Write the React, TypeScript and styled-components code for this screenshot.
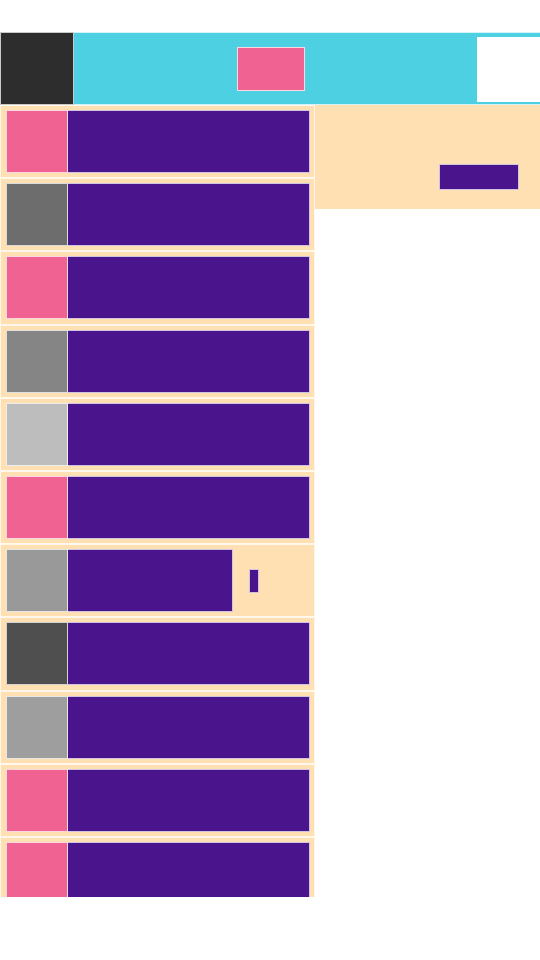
import React from "react";
import styled, { createGlobalStyle } from "styled-components";

const Global = createGlobalStyle`
  html, body { margin: 0; padding: 0; background: #ffffff; }
  body { font-family: "Liberation Sans", Arial, sans-serif; overflow: hidden; }
  * { box-sizing: border-box; }
`;

const edge = "1px solid rgba(255,255,255,0.75)";

const Page = styled.div`
  width: 540px;
  height: 960px;
  padding-top: 32px;
  overflow: hidden;
`;

const Header = styled.header`
  display: flex;
  height: 73px;
`;

const Logo = styled.div`
  width: 74px;
  height: 73px;
  background: #2d2d2d;
  border: ${edge};
`;

const Bar = styled.div`
  flex: 1;
  display: flex;
  align-items: flex-start;
  background: #4dd0e1;
  border: ${edge};
  border-left: none;
  border-right: none;
`;

const Title = styled.div`
  width: 68px;
  height: 44px;
  margin-left: 163px;
  margin-top: 14px;
  background: #f06292;
  border: ${edge};
`;

const Avatar = styled.div`
  width: 63px;
  height: 65px;
  margin-left: auto;
  margin-top: 4px;
  background: #ffffff;
`;

const Body = styled.div`
  display: flex;
  align-items: flex-start;
`;

const List = styled.div`
  width: 315px;
  height: 792px;
  overflow: hidden;
  display: flex;
  flex-direction: column;
`;

const Row = styled.div`
  flex: 0 0 73.2px;
  display: flex;
  align-items: center;
  padding: 0 4px 0 5px;
  background: #ffe0b2;
  border: ${edge};
`;

const Thumb = styled.div<{ $c: string }>`
  width: 62px;
  height: 63px;
  background: ${(p) => p.$c};
  border: ${edge};
`;

const Label = styled.div<{ $w: number }>`
  width: ${(p) => p.$w}px;
  height: 63px;
  background: #4a148c;
  border: ${edge};
  border-left: none;
`;

const Tag = styled.div`
  width: 10px;
  height: 24px;
  margin-left: 16px;
  background: #4a148c;
  border: ${edge};
`;

const Panel = styled.aside`
  width: 225px;
  height: 104px;
  background: #ffe0b2;
  display: flex;
  align-items: flex-end;
  justify-content: flex-end;
  padding: 0 21px 19px 0;
`;

const Action = styled.div`
  width: 80px;
  height: 26px;
  background: #4a148c;
  border: ${edge};
`;

const rows = [
  { c: "#f06292" },
  { c: "#6d6d6d" },
  { c: "#f06292" },
  { c: "#858585" },
  { c: "#bdbdbd" },
  { c: "#f06292" },
  { c: "#999999", short: true },
  { c: "#4f4f4f" },
  { c: "#9e9e9e" },
  { c: "#f06292" },
  { c: "#f06292" },
];

export default function App() {
  return (
    <Page>
      <Global />
      <Header>
        <Logo />
        <Bar>
          <Title />
          <Avatar />
        </Bar>
      </Header>
      <Body>
        <List>
          {rows.map((r, i) => (
            <Row key={i}>
              <Thumb $c={r.c} />
              <Label $w={r.short ? 165 : 242} />
              {r.short && <Tag />}
            </Row>
          ))}
        </List>
        <Panel>
          <Action />
        </Panel>
      </Body>
    </Page>
  );
}
